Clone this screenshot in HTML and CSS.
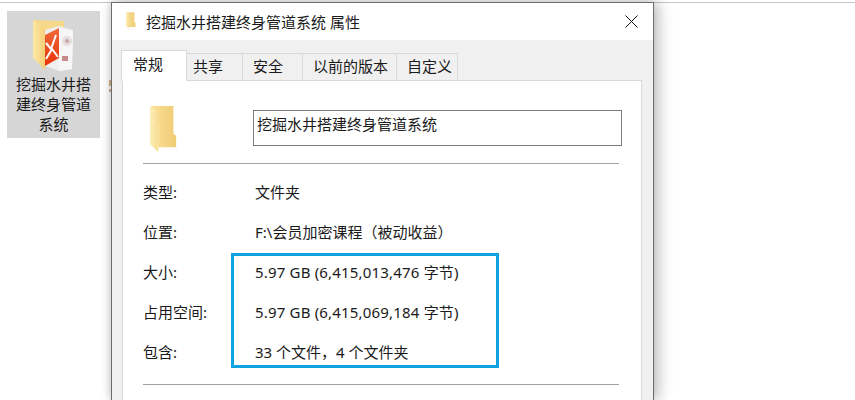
FILE: index.html
```html
<!DOCTYPE html>
<html lang="zh-CN">
<head>
  <meta charset="UTF-8" />
  <title>属性</title>
  <link rel="stylesheet" href="styles.css">
</head>
<body>
  <div class="desktop">
    <div class="desk-icon">
      <svg class="zip-icon" width="42" height="52" viewBox="0 0 42 52">
        <defs>
          <linearGradient id="deskFold" x1="0" y1="0" x2="1" y2="0">
            <stop offset="0" stop-color="#fde9a6"/>
            <stop offset="1" stop-color="#f4cf78"/>
          </linearGradient>
          <linearGradient id="redCover" x1="0" y1="0" x2="0" y2="1">
            <stop offset="0" stop-color="#ef6a3a"/>
            <stop offset="1" stop-color="#e8330a"/>
          </linearGradient>
        </defs>
        <path d="M0 0 L31 1 L31 9 L12 16 Z" fill="#f6d98a"/>
        <path d="M12 10 L26 6 L40 10 L39 49 L26 51 L12 46 Z" fill="#efefef"/>
        <path d="M26 8 L40 11 L39 49 L26 51 Z" fill="#f6f6f6"/>
        <path d="M0 0 L12 9 L12 50 L0 38 Z" fill="url(#deskFold)"/>
        <path d="M12 15 L26 8 L26 38 L12 46 Z" fill="url(#redCover)"/>
        <path d="M13 23 L18 29 L23 15 M13 39 L19 29 L25 37" fill="none" stroke="#fff" stroke-width="2"/>
        <circle cx="34" cy="21" r="5" fill="#e4dede"/>
        <circle cx="34" cy="21" r="2" fill="#c9a5a5"/>
        <rect x="29" y="36" width="6" height="5" fill="#c88a8a"/>
      </svg>
      <div class="desk-label">挖掘水井搭建终身管道系统</div>
    </div>
    <svg class="sliver" width="2" height="12" viewBox="0 0 2 12">
      <path d="M1 0v4M0 5h2M1 9v3" stroke="#a8660f" fill="none"/>
    </svg>

    <div class="dialog">
      <div class="titlebar">
        <svg class="title-folder" width="12" height="17" viewBox="0 0 30 50">
          <use href="#folder"/>
        </svg>
        <span class="title-text">挖掘水井搭建终身管道系统 属性</span>
        <svg class="close" width="13" height="13" viewBox="0 0 13 13">
          <path d="M.5.5l12 12M12.500.5l-12 12" stroke="#111" fill="none"/>
        </svg>
      </div>

      <div class="body">
        <div class="tabs">
          <div class="tab active">常规</div>
          <div class="tab tab-share">共享</div>
          <div class="tab tab-safe">安全</div>
          <div class="tab tab-prev">以前的版本</div>
          <div class="tab tab-custom">自定义</div>
        </div>

        <div class="panel">
          <div class="name-row">
            <svg class="big-folder" width="28" height="48" viewBox="0 0 30 50" preserveAspectRatio="none">
              <defs>
                <linearGradient id="foldBack" x1="0" y1="0" x2="1" y2="0">
                  <stop offset="0" stop-color="#fbe29a"/>
                  <stop offset="1" stop-color="#f0cb74"/>
                </linearGradient>
                <linearGradient id="foldFront" x1="0" y1="0" x2="1" y2="0">
                  <stop offset="0" stop-color="#fdeeb9"/>
                  <stop offset="1" stop-color="#f7dc92"/>
                </linearGradient>
                <symbol id="folder" viewBox="0 0 30 50">
                  <path d="M1 1 H25 V30 L28 32 V44 L9 44 V20 Z" fill="url(#foldBack)"/>
                  <path d="M0 1 L9 7 V49 L0 41 Z" fill="url(#foldFront)"/>
                </symbol>
              </defs>
              <use href="#folder"/>
            </svg>
            <div class="name-box">挖掘水井搭建终身管道系统</div>
          </div>
          <hr class="sep">
          <div class="props">
            <div class="prop-label">类型:</div><div class="prop-value">文件夹</div>
            <div class="prop-label">位置:</div><div class="prop-value">F:\会员加密课程（被动收益）</div>
            <div class="prop-label">大小:</div><div class="prop-value size">5.97 GB (6,415,013,476 字节)</div>
            <div class="prop-label">占用空间:</div><div class="prop-value size">5.97 GB (6,415,069,184 字节)</div>
            <div class="prop-label">包含:</div><div class="prop-value">33 个文件，4 个文件夹</div>
          </div>
          <hr class="sep">
          <div class="highlight"></div>
        </div>
      </div>
    </div>
  </div>
</body>
</html>
```

FILE: styles.css
```css
* {
  margin: 0;
  padding: 0;
  box-sizing: border-box;
}

html, body {
  height: 400px;
  overflow: hidden;
  background-color: #fff;
}

body {
  font-family: "Noto Sans", "Noto Sans CJK SC", sans-serif;
  font-size: 15px;
  color: #1a1a1a;
}

.desktop {
  display: flex;
  align-items: flex-start;
  height: 400px;
  padding: 2px 0 0 7px;
  background: linear-gradient(#fff 2px, #c8c8c8 2px, #c8c8c8 3px, #fff 3px);
}

.desk-icon {
  width: 93px;
  height: 127px;
  margin-top: 9px;
  padding-top: 9px;
  background-color: #d6d6d6;
  text-align: center;
  flex-shrink: 0;
}

.zip-icon {
  display: block;
  margin: 0 0 2px 26px;
}

.desk-label {
  width: 80px;
  margin: 0 auto;
  line-height: 20px;
}

.sliver {
  width: 2px;
  margin: 78px 0 0 9px;
  flex-shrink: 0;
}

.dialog {
  position: relative;
  width: 543px;
  height: 398px;
  border: 1px solid #6d6d6d;
  border-bottom: none;
  background-color: #f0f0f0;
  box-shadow: 4px 0 14px rgba(0, 0, 0, 0.28), -2px 0 6px rgba(0, 0, 0, 0.1);
  flex-shrink: 0;
}

.titlebar {
  display: flex;
  align-items: center;
  height: 37px;
  padding: 0 15px 0 13px;
  background-color: #fff;
}

.title-folder {
  margin-top: -2px;
}

.title-text {
  margin-left: 9px;
  flex: 1;
  margin-top: -1px;
}

.body {
  padding: 10px 11px 0 9px;
}

.tabs {
  display: flex;
  align-items: flex-end;
  height: 31px;
  margin-bottom: -1px;
  position: relative;
  z-index: 1;
}

.tab {
  height: 28px;
  line-height: 25px;
  border: 1px solid #d9d9d9;
  border-left: none;
  white-space: nowrap;
}

.tab.active {
  width: 66px;
  height: 31px;
  line-height: 27px;
  padding-left: 11px;
  border-left: 1px solid #d9d9d9;
  border-bottom: none;
  background-color: #fff;
}

.tab-share { width: 56px; padding-left: 6px; }
.tab-safe { width: 60px; padding-left: 10px; }
.tab-prev { width: 94px; padding-left: 10px; }
.tab-custom { width: 61px; padding-left: 10px; }

.panel {
  position: relative;
  height: 320px;
  margin-left: 1px;
  padding: 29px 22px 0 20px;
  border: 1px solid #d9d9d9;
  border-bottom: none;
  background-color: #fff;
}

.name-row {
  display: flex;
  align-items: flex-start;
  height: 53px;
}

.big-folder {
  margin: -5px 0 0 7px;
  flex-shrink: 0;
}

.name-box {
  width: 369px;
  height: 36px;
  margin-left: 75px;
  padding: 2px 3px;
  border: 1px solid #7a7a7a;
  flex-shrink: 0;
}

.sep {
  border: none;
  border-top: 1px solid #a0a0a0;
  width: 476px;
}

.props {
  display: grid;
  grid-template-columns: 112px 1fr;
  grid-auto-rows: 40px;
  padding: 8px 0 12px;
  line-height: 40px;
}

.prop-value {
  white-space: nowrap;
}

.prop-value.size {
  letter-spacing: 0.18px;
}

.highlight {
  position: absolute;
  left: 108px;
  top: 172px;
  width: 268px;
  height: 115px;
  border: 3px solid #0fa3e0;
}
```
